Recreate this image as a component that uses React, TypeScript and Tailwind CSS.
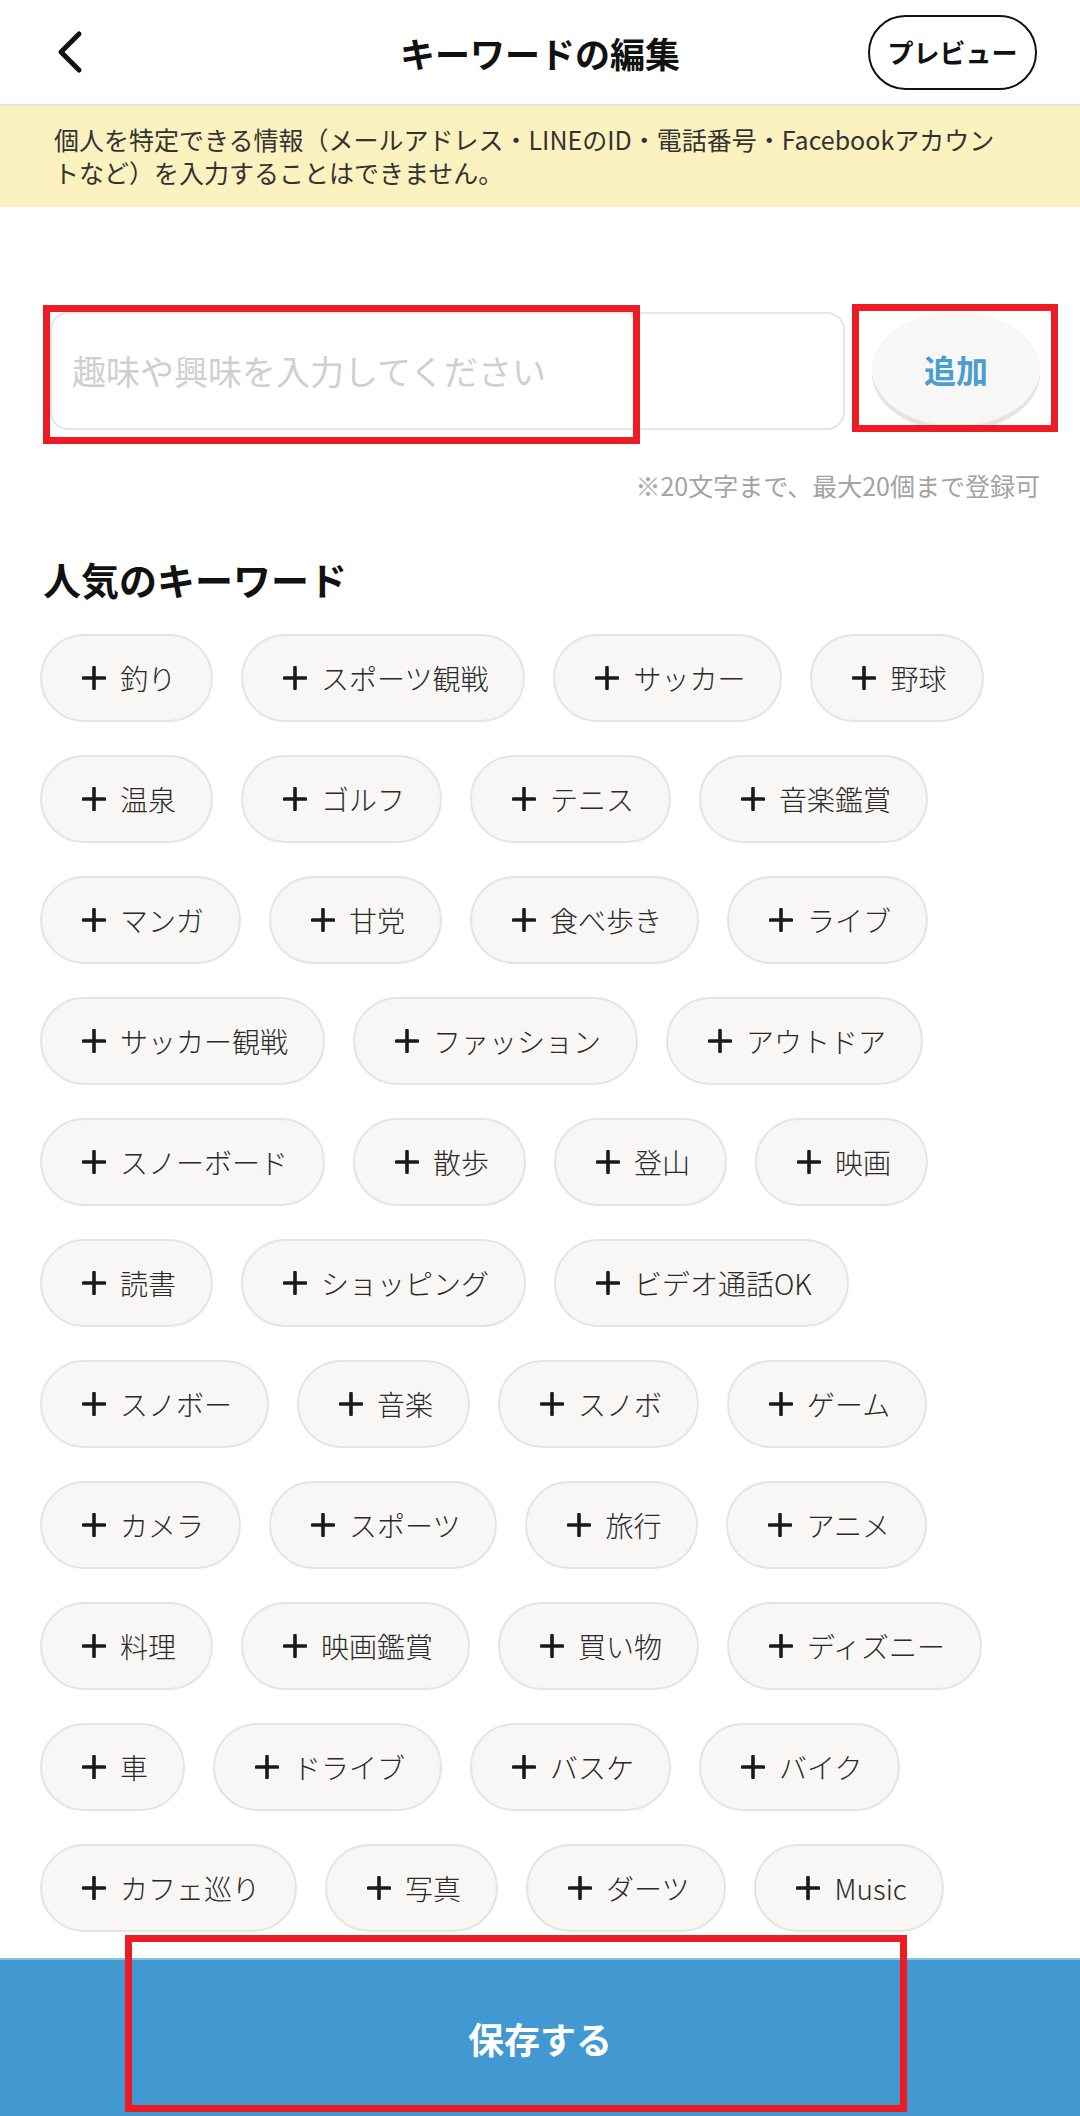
import React from "react";

const rows: string[] = [
  "釣り", "スポーツ観戦", "サッカー", "野球",
  "温泉", "ゴルフ", "テニス", "音楽鑑賞",
  "マンガ", "甘党", "食べ歩き", "ライブ",
  "サッカー観戦", "ファッション", "アウトドア",
  "スノーボード", "散歩", "登山", "映画",
  "読書", "ショッピング", "ビデオ通話OK",
  "スノボー", "音楽", "スノボ", "ゲーム",
  "カメラ", "スポーツ", "旅行", "アニメ",
  "料理", "映画鑑賞", "買い物", "ディズニー",
  "車", "ドライブ", "バスケ", "バイク",
  "カフェ巡り", "写真", "ダーツ", "Music",
];

function Plus() {
  return (
    <svg width="24" height="24" viewBox="0 0 24 24" className="shrink-0">
      <path d="M12 1.5V22.5M1.5 12H22.5" stroke="#1a1a1a" strokeWidth="3.6" strokeLinecap="round" fill="none" />
    </svg>
  );
}

function Chip({ label }: { label: string }) {
  return (
    <div className="h-[88px] rounded-full border-2 border-[#e4e4e4] bg-[#f8f7f5] pl-[40px] pr-[35px] flex items-center gap-[14px]">
      <Plus />
      <span className="text-[28px] leading-none font-light text-[#2a2a2a] whitespace-nowrap">{label}</span>
    </div>
  );
}

export default function App() {
  return (
    <div className="relative w-[1080px] h-[2116px] overflow-hidden bg-white flex flex-col font-['Noto_Sans_CJK_JP','Noto_Sans',sans-serif]">
      {/* Header */}
      <header className="h-[106px] shrink-0 border-b-2 border-[#e3e3e3] grid grid-cols-[1fr_auto_1fr] items-center">
        <div className="pl-[56px] flex items-center">
          <svg width="28" height="44" viewBox="0 0 28 44">
            <path d="M23 4L5 22L23 40" stroke="#111" strokeWidth="5" strokeLinecap="round" strokeLinejoin="round" fill="none" />
          </svg>
        </div>
        <h1 className="text-[35px] font-bold text-[#111] leading-none">キーワードの編集</h1>
        <div className="flex justify-end pr-[43px]">
          <button className="w-[169px] h-[75px] rounded-full border-[2.5px] border-[#111] text-[26px] font-bold text-[#111] leading-none">
            プレビュー
          </button>
        </div>
      </header>

      {/* Notice */}
      <div className="h-[101px] shrink-0 bg-[#fbf2bf] px-[54px] pt-[17px] text-[25px] leading-[33px] text-[#333]">
        <span className="block whitespace-nowrap">個人を特定できる情報（メールアドレス・LINEのID・電話番号・Facebookアカウン</span>
        <span className="block whitespace-nowrap">トなど）を入力することはできません。</span>
      </div>

      {/* Main */}
      <main className="flex-1 px-[40px] overflow-hidden">
        <div className="mt-[105px] pl-[10px] flex items-start gap-[27px]">
          <div className="flex-1 h-[118px] rounded-[18px] border-2 border-[#e6e6e6] flex items-center pl-[20px]">
            <span className="text-[34px] text-[#cfcfcf] leading-none whitespace-nowrap">趣味や興味を入力してください</span>
          </div>
          <button className="w-[168px] h-[114px] rounded-[50%] bg-[#f8f7f5] shadow-[0_5px_0_#e4e4e4] flex items-center justify-center text-[32px] font-bold text-[#4a9dd0] leading-none">
            追加
          </button>
        </div>

        <p className="mt-[40px] text-right text-[25px] leading-[30px] text-[#a3a3a3]">※20文字まで、最大20個まで登録可</p>

        <h2 className="mt-[55px] pl-[3px] text-[38px] leading-[48px] font-bold text-[#111]">人気のキーワード</h2>

        <div className="mt-[31px] flex flex-wrap gap-x-[28px] gap-y-[33px]">
          {rows.map((k, i) => (
            <Chip key={i} label={k} />
          ))}
        </div>
      </main>

      {/* Bottom bar */}
      <footer className="h-[158px] shrink-0 bg-[#4299d1] border-t-2 border-[#84c2e6] flex items-center justify-center">
        <span className="text-[36px] font-bold text-white leading-none">保存する</span>
      </footer>

      {/* Red annotation boxes */}
      <div className="absolute left-[43px] top-[305px] w-[597px] h-[139px] border-[7px] border-[#ed1c24] pointer-events-none" />
      <div className="absolute left-[852px] top-[304px] w-[206px] h-[128px] border-[7px] border-[#ed1c24] pointer-events-none" />
      <div className="absolute left-[125px] top-[1935px] w-[782px] h-[177px] border-[7px] border-[#ed1c24] pointer-events-none" />
    </div>
  );
}
